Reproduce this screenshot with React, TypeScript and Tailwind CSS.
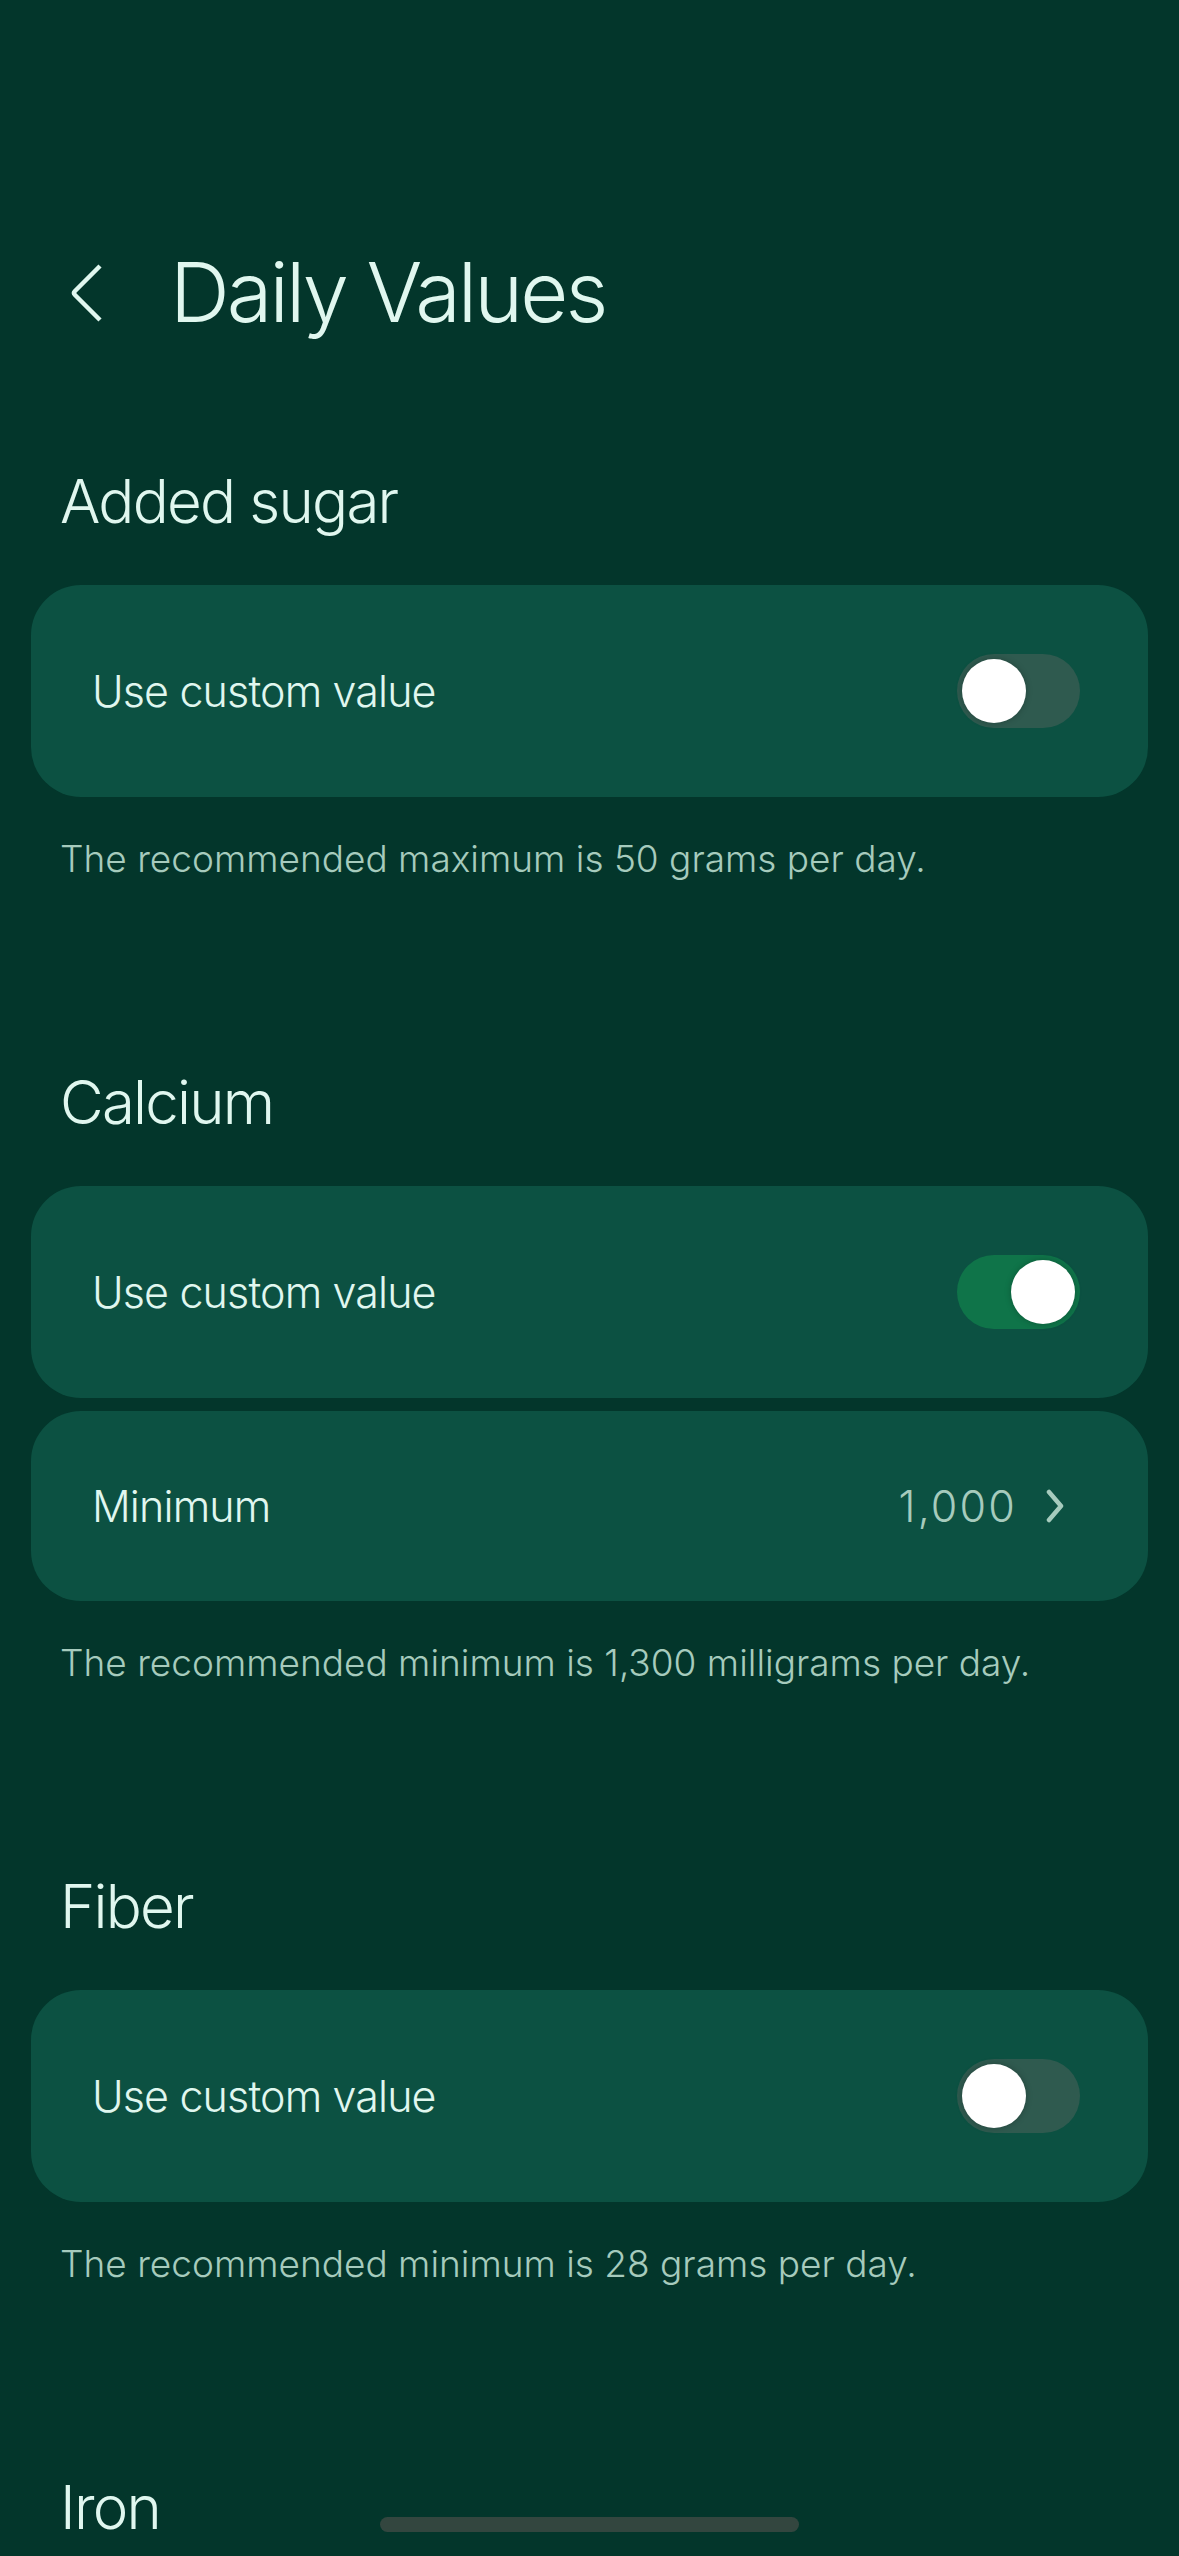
import React, { useState } from 'react';

type Section = {
  title: string;
  enabled: boolean;
  minimum?: string;
  note: string;
};

const sections: Section[] = [
  { title: 'Added sugar', enabled: false, note: 'The recommended maximum is 50 grams per day.' },
  {
    title: 'Calcium',
    enabled: true,
    minimum: '1,000',
    note: 'The recommended minimum is 1,300 milligrams per day.',
  },
  { title: 'Fiber', enabled: false, note: 'The recommended minimum is 28 grams per day.' },
];

const Toggle: React.FC<{ on: boolean; onChange: () => void }> = ({ on, onChange }) => (
  <button
    onClick={onChange}
    className={`flex h-[74px] w-[123px] shrink-0 items-center rounded-full px-[5px] ${
      on ? 'justify-end bg-[#0f7449]' : 'justify-start bg-[#2f5a4f]'
    }`}
  >
    <span className="block h-[64px] w-[64px] rounded-full bg-white shadow-[0_0_6px_rgba(0,0,0,0.25)]" />
  </button>
);

const SectionBlock: React.FC<{ section: Section }> = ({ section }) => {
  const [on, setOn] = useState(section.enabled);

  return (
    <div className="flex flex-col">
      <h2 className="pl-[60px] text-[60px] leading-none font-light tracking-[-0.03em] text-[#e0f7ef]">
        {section.title}
      </h2>
      <div className="mt-[54px] flex flex-col gap-[13px] px-[31px]">
        <div className="flex h-[212px] items-center justify-between rounded-[50px] bg-[#0c5142] pl-[61px] pr-[68px]">
          <span className="text-[43px] font-light tracking-[-0.02em] text-[#e0f7ef]">Use custom value</span>
          <Toggle on={on} onChange={() => setOn(!on)} />
        </div>
        {on && section.minimum && (
          <div className="flex h-[190px] items-center justify-between rounded-[50px] bg-[#0c5142] pl-[61px] pr-[84px]">
            <span className="text-[43px] font-light tracking-[-0.02em] text-[#e0f7ef]">Minimum</span>
            <div className="flex items-center gap-[29px]">
              <span className="text-[43px] font-light tracking-[0.05em] text-[#a6cbbd]">{section.minimum}</span>
              <svg width="18" height="34" viewBox="0 0 18 34" fill="none">
                <path d="M3 3 L15 17 L3 31" stroke="#a6cbbd" strokeWidth="4.5" strokeLinecap="round" strokeLinejoin="round" />
              </svg>
            </div>
          </div>
        )}
      </div>
      <p className="mt-[43px] pl-[60px] text-[37px] leading-none font-light tracking-normal text-[#a6cbbd]">
        {section.note}
      </p>
    </div>
  );
};

export default function App() {
  return (
    <div
      className="relative h-[2556px] w-[1179px] overflow-hidden bg-[#03362b]"
      style={{ fontFamily: 'Inter, "Noto Sans", sans-serif' }}
    >
      <div className="flex flex-col pt-[251px]">
        <div className="flex items-center pl-[70px]">
          <svg width="34" height="62" viewBox="0 0 34 62" fill="none" className="shrink-0">
            <path
              d="M30 4 L5 29 Q3 31 5 33 L30 58"
              stroke="#e0f7ef"
              strokeWidth="4.5"
              strokeLinecap="butt"
              strokeLinejoin="round"
            />
          </svg>
          <h1 className="ml-[66px] text-[83px] leading-none font-light tracking-[-0.035em] text-[#e0f7ef]">
            Daily Values
          </h1>
        </div>

        <div className="mt-[137px] flex flex-col gap-[195px]">
          {sections.map((s) => (
            <SectionBlock key={s.title} section={s} />
          ))}
          <h2 className="pl-[60px] text-[60px] leading-none font-light tracking-[-0.03em] text-[#e0f7ef]">
            Iron
          </h2>
        </div>
      </div>

      <div className="absolute bottom-[24px] left-[380px] h-[15px] w-[419px] rounded-full bg-[#33463f]" />
    </div>
  );
}
